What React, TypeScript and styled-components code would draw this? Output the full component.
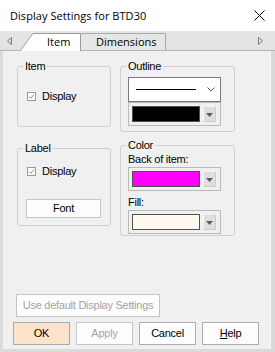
import React from 'react';
import styled, { createGlobalStyle } from 'styled-components';

const GlobalStyle = createGlobalStyle`
  html, body {
    margin: 0;
    padding: 0;
    background: #ffffff;
  }
  body {
    font-family: "Liberation Sans", Arial, sans-serif;
  }
`;

const Dialog = styled.div`
  width: 275px;
  height: 352px;
  display: flex;
  flex-direction: column;
  background: #dadada;
  overflow: hidden;
`;

const TitleBar = styled.div`
  height: 31px;
  flex: none;
  box-sizing: border-box;
  padding: 0 10px;
  background: #ffffff;
  display: flex;
  align-items: center;
  justify-content: space-between;
  font-family: "Open Sans", "Noto Sans", sans-serif;
  font-size: 11px;
  letter-spacing: 0.05px;
  color: #000;
`;

const TabStrip = styled.div`
  height: 20px;
  flex: none;
  box-sizing: border-box;
  background: #e3e3e3;
  border-bottom: 1px solid #b4b4b4;
  display: flex;
  align-items: flex-end;
`;

const ArrowBox = styled.div<{ $side: 'left' | 'right' }>`
  align-self: center;
  display: flex;
  width: ${p => (p.$side === 'left' ? '19px' : 'auto')};
  margin-left: ${p => (p.$side === 'right' ? 'auto' : '0')};
  padding: ${p => (p.$side === 'left' ? '1px 0 0 7px' : '1px 12px 0 0')};
  box-sizing: border-box;
`;

const ActiveTab = styled.div`
  position: relative;
  z-index: 2;
  width: 62px;
  height: 18px;
  margin-bottom: -1px;
  box-sizing: border-box;
  padding: 1px 0 0 28px;
  font-family: "Open Sans", "Noto Sans", sans-serif;
  font-size: 11px;
  line-height: 15px;
  color: #000;
`;

const TabShape = styled.svg`
  position: absolute;
  left: 0;
  top: 0;
  z-index: -1;
`;

const Tab = styled.div`
  position: relative;
  z-index: 1;
  width: 86px;
  height: 17px;
  margin-left: -1px;
  box-sizing: border-box;
  padding-left: 15px;
  border: 1px solid #a9a9a9;
  border-bottom: none;
  border-radius: 2px 2px 0 0;
  background: #e6e6e6;
  font-family: "Open Sans", "Noto Sans", sans-serif;
  font-size: 11px;
  line-height: 15px;
  color: #000;
`;

const Body = styled.div`
  flex: 1;
  min-height: 0;
  display: flex;
  padding: 0 4px 3px 3px;
`;

const Page = styled.div`
  flex: 1;
  background: #f0f0f0;
  border-right: 1px solid #fafafa;
  display: flex;
  flex-direction: column;
  padding: 9px 0 4px 0;
`;

const Columns = styled.div`
  display: flex;
  gap: 9px;
  padding-left: 14px;
`;

const Column = styled.div<{ $w: number; $gap: number }>`
  width: ${p => p.$w}px;
  display: flex;
  flex-direction: column;
  gap: ${p => p.$gap}px;
`;

const Group = styled.fieldset<{ $h: number }>`
  margin: 0;
  padding: 0;
  min-width: 0;
  height: ${p => p.$h}px;
  box-sizing: border-box;
  border: 1px solid #cfcfcf;
  border-radius: 3px;
`;

const Legend = styled.legend`
  margin-left: 5px;
  padding: 0 2px;
  font-size: 11px;
  line-height: 13px;
  letter-spacing: -0.25px;
  color: #000;
`;

const GroupBody = styled.div<{ $pt: number; $pl: number }>`
  display: flex;
  flex-direction: column;
  align-items: flex-start;
  padding: ${p => p.$pt}px 0 0 ${p => p.$pl}px;
`;

const CheckRow = styled.label`
  display: flex;
  align-items: center;
  gap: 6px;
  font-size: 11px;
  line-height: 13px;
  letter-spacing: -0.25px;
  color: #000;
`;

const FieldLabel = styled.div<{ $mt: number }>`
  margin-top: ${p => p.$mt}px;
  margin-bottom: 1px;
  font-size: 11px;
  line-height: 13px;
  letter-spacing: -0.25px;
  color: #000;
`;

const LineCombo = styled.div`
  width: 93px;
  height: 25px;
  box-sizing: border-box;
  border: 1px solid #7a7a7a;
  background: #ffffff;
  display: flex;
  align-items: center;
  justify-content: space-between;
  padding: 0 5px 0 7px;
`;

const LineSample = styled.div`
  width: 60px;
  height: 1px;
  background: #000;
`;

const ColorCombo = styled.div`
  width: 93px;
  height: 24px;
  box-sizing: border-box;
  border: 1px solid #b9b9b9;
  background: #f0f0f0;
  display: flex;
  align-items: center;
  padding-left: 3px;
`;

const Swatch = styled.div<{ $color: string }>`
  width: 68px;
  height: 16px;
  box-sizing: border-box;
  border: 1px solid #505050;
  background: ${p => p.$color};
`;

const DropButton = styled.div`
  width: 13px;
  height: 16px;
  margin-left: 3px;
  box-sizing: border-box;
  border: 1px solid #cdcdcd;
  border-top-color: #f4f4f4;
  border-left-color: #f4f4f4;
  background: #dedede;
  display: flex;
  align-items: flex-end;
  justify-content: center;
  padding-bottom: 4px;
`;

const Button = styled.button<{ $w: number; $tone?: 'default' | 'disabled' }>`
  width: ${p => p.$w}px;
  height: 23px;
  margin: 0;
  padding: 0;
  box-sizing: border-box;
  border: 1px solid ${p => (p.$tone === 'default' ? '#a9a9a9' : p.$tone === 'disabled' ? '#c6c6c6' : '#adadad')};
  border-radius: 0;
  background: ${p => (p.$tone === 'default' ? '#fde3ca' : '#fdfdfd')};
  color: ${p => (p.$tone === 'disabled' ? '#a3a3a3' : '#000')};
  font-family: "Liberation Sans", Arial, sans-serif;
  font-size: 11px;
  line-height: 13px;
  letter-spacing: -0.25px;
  white-space: nowrap;
`;

const FontButton = styled(Button)`
  height: 19px;
  margin: 21px 0 0 -1px;
  border-color: #c8c8c8;
`;

const Footer = styled.div`
  margin-top: auto;
  display: flex;
  flex-direction: column;
  align-items: flex-start;
  gap: 5px;
`;

const DefaultsButton = styled(Button)`
  margin-left: 13px;
`;

const ButtonRow = styled.div`
  display: flex;
  gap: 6px;
  padding-left: 10px;
`;

const CloseIcon = () => (
  <svg width="11" height="11" viewBox="0 0 11 11">
    <path d="M0.5 0.5 L10.5 10.5 M10.5 0.5 L0.5 10.5" stroke="#000" strokeWidth="1" fill="none" />
  </svg>
);

const Arrow = ({ dir }: { dir: 'left' | 'right' }) => (
  <svg width="5" height="8" viewBox="0 0 5 8">
    <path
      d={dir === 'left' ? 'M4.5 0.5 L0.5 4 L4.5 7.5 Z' : 'M0.5 0.5 L4.5 4 L0.5 7.5 Z'}
      stroke="#7a7a7a"
      strokeWidth="1"
      fill="none"
    />
  </svg>
);

const Check = () => (
  <svg width="9" height="9" viewBox="0 0 9 9">
    <rect x="0.5" y="0.5" width="8" height="8" fill="#ffffff" stroke="#9a9a9a" />
    <path d="M2 4.5 L3.8 6.3 L7 2.6" stroke="#8a8a8a" strokeWidth="1" fill="none" />
  </svg>
);

const Chevron = () => (
  <svg width="8" height="5" viewBox="0 0 8 5">
    <path d="M0.5 0.5 L4 4 L7.5 0.5" stroke="#555" strokeWidth="1" fill="none" />
  </svg>
);

const DownTriangle = () => (
  <svg width="7" height="4" viewBox="0 0 7 4">
    <path d="M0 0 H7 L3.5 4 Z" fill="#5c5c5c" />
  </svg>
);

const ColorPicker = ({ color }: { color: string }) => (
  <ColorCombo>
    <Swatch $color={color} />
    <DropButton>
      <DownTriangle />
    </DropButton>
  </ColorCombo>
);

export default function App() {
  return (
    <Dialog>
      <GlobalStyle />
      <TitleBar>
        <span>Display Settings for BTD30</span>
        <CloseIcon />
      </TitleBar>

      <TabStrip>
        <ArrowBox $side="left">
          <Arrow dir="left" />
        </ArrowBox>
        <ActiveTab>
          <TabShape width="62" height="18" viewBox="0 0 62 18">
            <path d="M1 18 L14 0.5 L61.5 0.5 L61.5 18" fill="#ffffff" stroke="#9c9c9c" strokeWidth="1" />
          </TabShape>
          Item
        </ActiveTab>
        <Tab>Dimensions</Tab>
        <ArrowBox $side="right">
          <Arrow dir="right" />
        </ArrowBox>
      </TabStrip>

      <Body>
        <Page>
          <Columns>
            <Column $w={94} $gap={15}>
              <Group $h={67}>
                <Legend>Item</Legend>
                <GroupBody $pt={17} $pl={9}>
                  <CheckRow>
                    <Check />
                    Display
                  </CheckRow>
                </GroupBody>
              </Group>
              <Group $h={84}>
                <Legend>Label</Legend>
                <GroupBody $pt={10} $pl={9}>
                  <CheckRow>
                    <Check />
                    Display
                  </CheckRow>
                  <FontButton $w={75}>Font</FontButton>
                </GroupBody>
              </Group>
            </Column>

            <Column $w={115} $gap={7}>
              <Group $h={72}>
                <Legend>Outline</Legend>
                <GroupBody $pt={4} $pl={7}>
                  <LineCombo>
                    <LineSample />
                    <Chevron />
                  </LineCombo>
                  <ColorPicker color="#000000" />
                </GroupBody>
              </Group>
              <Group $h={97}>
                <Legend>Color</Legend>
                <GroupBody $pt={1} $pl={7}>
                  <FieldLabel $mt={0}>Back of item:</FieldLabel>
                  <ColorPicker color="#ff00ff" />
                  <FieldLabel $mt={5}>Fill:</FieldLabel>
                  <ColorPicker color="#fff9f0" />
                </GroupBody>
              </Group>
            </Column>
          </Columns>

          <Footer>
            <DefaultsButton $w={144} $tone="disabled">Use default Display Settings</DefaultsButton>
            <ButtonRow>
              <Button $w={57} $tone="default">OK</Button>
              <Button $w={57} $tone="disabled">Apply</Button>
              <Button $w={57}>Cancel</Button>
              <Button $w={57}>
                <u>H</u>elp
              </Button>
            </ButtonRow>
          </Footer>
        </Page>
      </Body>
    </Dialog>
  );
}
